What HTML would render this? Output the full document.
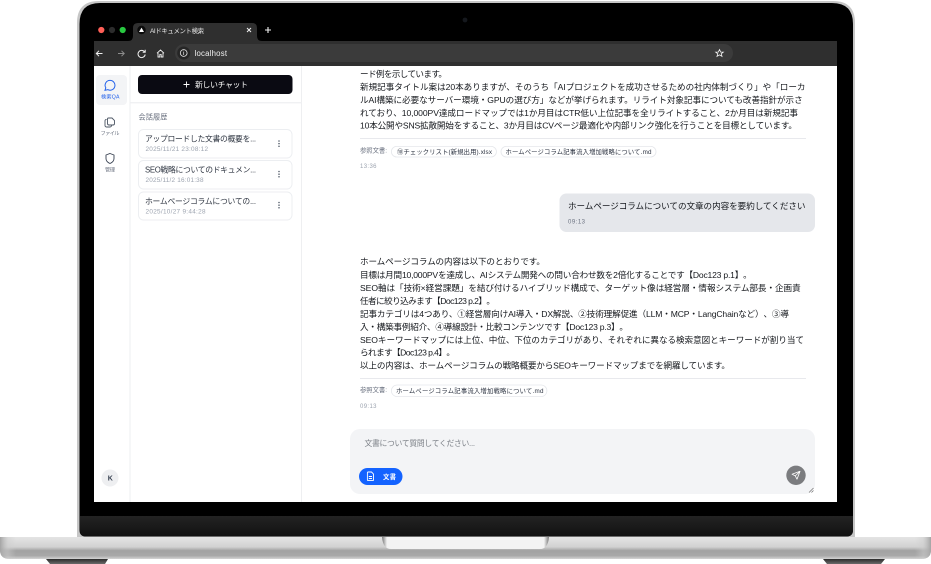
<!DOCTYPE html>
<html lang="ja"><head><meta charset="utf-8"><title>AIドキュメント検索</title>
<style>
html,body{margin:0;padding:0;background:#fff;width:931px;height:564px;overflow:hidden}
svg{display:block}
text{font-family:"Liberation Sans","Noto Sans CJK JP",sans-serif;white-space:pre;text-spacing-trim:space-all}
.m{font-size:8.6px;fill:#15181d}
.s{font-size:6.4px;fill:#6b7280}
.c{font-size:6.3px;fill:#2b3240}
.t{font-size:6px;fill:#9ca3af}
.n{font-size:7.8px;fill:#2f3642}
.d{font-size:6.4px;fill:#9ca3af}
</style></head><body>
<svg width="931" height="564" viewBox="0 0 931 564" xmlns="http://www.w3.org/2000/svg">
<defs>
<linearGradient id="base" x1="0" y1="0" x2="0" y2="1"><stop offset="0" stop-color="#e4e4e4"/><stop offset=".45" stop-color="#d2d2d2"/><stop offset=".62" stop-color="#a2a2a2"/><stop offset=".85" stop-color="#a8a8a8"/><stop offset="1" stop-color="#d4d4d4"/></linearGradient>
<linearGradient id="endL" x1="0" y1="0" x2="1" y2="0"><stop offset="0" stop-color="#a4a4a4"/><stop offset=".5" stop-color="#cdcdcd" stop-opacity=".5"/><stop offset="1" stop-color="#cdcdcd" stop-opacity="0"/></linearGradient>
<linearGradient id="endR" x1="1" y1="0" x2="0" y2="0"><stop offset="0" stop-color="#a4a4a4"/><stop offset=".5" stop-color="#cdcdcd" stop-opacity=".5"/><stop offset="1" stop-color="#cdcdcd" stop-opacity="0"/></linearGradient>
<linearGradient id="bez" x1="0" y1="0" x2="0" y2="1"><stop offset="0" stop-color="#232323"/><stop offset="1" stop-color="#111"/></linearGradient>
<linearGradient id="notch" x1="0" y1="0" x2="1" y2="0"><stop offset="0" stop-color="#777"/><stop offset=".03" stop-color="#f3f3f3"/><stop offset=".97" stop-color="#f3f3f3"/><stop offset="1" stop-color="#777"/></linearGradient>
<linearGradient id="foot" x1="0" y1="0" x2="0" y2="1"><stop offset="0" stop-color="#2c2c2c"/><stop offset="1" stop-color="#6a6a6a"/></linearGradient>
</defs>

<!-- lid -->
<path d="M99 1H833Q855 1 855 23V537H77V23Q77 1 99 1Z" fill="#c6c6c6"/>
<path d="M100 3H832Q853 3 853 24V530Q853 536.5 846 536.5H86Q79.5 536.5 79.5 530V24Q79.5 3 100 3Z" fill="#000"/>
<path d="M80 516H853V530Q853 536.5 846 536.5H86Q80 536.5 80 530Z" fill="url(#bez)"/>
<circle cx="465" cy="20" r="2.4" fill="#15181d"/>

<!-- base -->
<path d="M46 559H108L105 564H50Z" fill="url(#foot)"/>
<path d="M823 559H885L881 564H827Z" fill="url(#foot)"/>
<path d="M0 537H931V550Q931 559 921 559H10Q0 559 0 550Z" fill="url(#base)"/>
<path d="M0 537H16V559H10Q0 559 0 550Z" fill="url(#endL)"/>
<path d="M931 537H915V559H921Q931 559 931 550Z" fill="url(#endR)"/>
<path d="M382 537H549Q548 549 540 549H391Q383 549 382 537Z" fill="url(#notch)"/>

<!-- browser chrome -->
<rect x="94" y="41" width="743" height="25" fill="#2f2f2f"/>
<path d="M128 41Q133 41 133 36V28Q133 23 138 23H252Q257 23 257 28V36Q257 41 262 41Z" fill="#2f2f2f"/>
<circle cx="101.3" cy="30" r="3.1" fill="#ff5f57"/>
<circle cx="112" cy="30" r="3.1" fill="#2c2c2c"/>
<circle cx="122.7" cy="30" r="3.1" fill="#28c840"/>
<circle cx="141.5" cy="30" r="4.2" fill="#0a0a0a"/>
<path d="M141.5 27.6L144 32H139Z" fill="#fff"/>
<text x="150" y="33" font-size="6.4" fill="#e8e8e8" textLength="54">AIドキュメント検索</text>
<path d="M247 28L251 32M251 28L247 32" stroke="#f0f0f0" stroke-width="1"/>
<path d="M268 27V33M265 30H271" stroke="#f0f0f0" stroke-width="1.1"/>
<path d="M102.5 53.5H96.5M99 50.8L96.3 53.5L99 56.2" stroke="#f0f0f0" stroke-width="1" fill="none"/>
<path d="M118 53.5H124M121.5 50.8L124.2 53.5L121.5 56.2" stroke="#8c8c8c" stroke-width="1" fill="none"/>
<path d="M144.5 51.8A3.6 3.6 0 1 0 145.2 54.5M145.2 49.8V52.3H142.7" stroke="#f0f0f0" stroke-width="1" fill="none"/>
<path d="M157 53.2L160.5 50L164 53.2M158 52.5V57H159.8V54.6H161.2V57H163V52.5" stroke="#f0f0f0" stroke-width=".9" fill="none"/>
<rect x="175" y="44" width="558" height="18" rx="9" fill="#3b3b3b"/>
<circle cx="183.7" cy="53" r="6.5" fill="#262626"/>
<circle cx="183.7" cy="53" r="3.4" stroke="#e8e8e8" stroke-width=".8" fill="none"/>
<path d="M183.7 52V55M183.7 50.8V51.4" stroke="#e8e8e8" stroke-width=".7"/>
<text x="194.5" y="56" font-size="7.8" fill="#f0f0f0" textLength="32.5">localhost</text>
<path d="M719.5 49.6L720.7 52.1H723.3L721.2 53.8L722 56.4L719.5 54.9L717 56.4L717.8 53.8L715.7 52.1H718.3Z" fill="none" stroke="#f0f0f0" stroke-width=".8"/>

<!-- page -->
<rect x="94" y="66" width="743" height="436" fill="#fff"/>
<path d="M130 66V502M301.5 66V502" stroke="#eeeff1" stroke-width="1"/>
<rect x="130.5" y="102" width="171" height="1.4" fill="#f0f1f3"/>

<!-- rail -->
<rect x="96" y="75" width="31" height="30" rx="4" fill="#f3f4f6"/>
<path d="M110 80.4A4.9 4.9 0 1 1 107.7 89.6L105 90.3L105.8 87.8A4.9 4.9 0 0 1 110 80.4Z" fill="none" stroke="#2563eb" stroke-width="1"/>
<text x="101" y="98.3" font-size="5.2" fill="#2563eb" textLength="18.5">検索QA</text>
<path d="M106.5 119.5H106A1.5 1.5 0 0 0 105 121V125.5A1.5 1.5 0 0 0 106.5 127H110A1.5 1.5 0 0 0 111.5 125.5V125" fill="none" stroke="#4b5563" stroke-width=".9"/>
<path d="M108.5 118H112L114.5 120.5V123.5A1.5 1.5 0 0 1 113 125H109A1.5 1.5 0 0 1 107.5 123.5V119A1 1 0 0 1 108.5 118Z" fill="none" stroke="#4b5563" stroke-width=".9"/>
<text x="100.5" y="135" font-size="5.2" fill="#6b7280" textLength="19">ファイル</text>
<path d="M110 153.5L114 155V158.5C114 161 112.2 162.6 110 163.5C107.8 162.6 106 161 106 158.5V155Z" fill="none" stroke="#374151" stroke-width=".9"/>
<text x="105" y="171.3" font-size="5.2" fill="#6b7280" textLength="10">管理</text>
<circle cx="110" cy="478" r="8.5" fill="#eeeff1"/>
<text x="107.8" y="480.5" font-size="7" font-weight="bold" fill="#374151">K</text>

<!-- sidebar -->
<rect x="138" y="75" width="154.5" height="19" rx="4" fill="#0a0a12"/>
<path d="M186.5 81.5V87.5M183.5 84.5H189.5" stroke="#fff" stroke-width=".9"/>
<text x="195" y="87.3" font-size="7.8" fill="#fff" textLength="53">新しいチャット</text>
<text x="138.5" y="119.5" font-size="7.2" fill="#6b7280" textLength="29">会話履歴</text>
<g fill="#fff" stroke="#eceef1" stroke-width=".9">
<rect x="138.5" y="129.5" width="153.5" height="28.5" rx="5"/>
<rect x="138.5" y="160.5" width="153.5" height="28.5" rx="5"/>
<rect x="138.5" y="192" width="153.5" height="28" rx="5"/>
</g>
<text class="n" x="145" y="141.5" textLength="111">アップロードした文書の概要を...</text>
<text class="d" x="145.5" y="151" textLength="62.5">2025/11/21 23:08:12</text>
<text class="n" x="145" y="172.5" textLength="111">SEO戦略についてのドキュメン...</text>
<text class="d" x="145.5" y="182" textLength="58">2025/11/2 16:01:38</text>
<text class="n" x="145" y="204" textLength="111">ホームページコラムについての...</text>
<text class="d" x="145.5" y="213.5" textLength="60">2025/10/27 9:44:28</text>
<g fill="#4b5563">
<circle cx="279" cy="141" r=".75"/><circle cx="279" cy="143.6" r=".75"/><circle cx="279" cy="146.2" r=".75"/>
<circle cx="279" cy="171.5" r=".75"/><circle cx="279" cy="174.1" r=".75"/><circle cx="279" cy="176.7" r=".75"/>
<circle cx="279" cy="202.5" r=".75"/><circle cx="279" cy="205.1" r=".75"/><circle cx="279" cy="207.7" r=".75"/>
</g>

<!-- assistant 1 -->
<text class="m" x="360" y="77" textLength="87">ード例を示しています。</text>
<text class="m" x="360" y="90" textLength="445.5">新規記事タイトル案は20本ありますが、そのうち「AIプロジェクトを成功させるための社内体制づくり」や「ローカ</text>
<text class="m" x="360" y="103" textLength="442.7">ルAI構築に必要なサーバー環境・GPUの選び方」などが挙げられます。リライト対象記事についても改善指針が示さ</text>
<text class="m" x="360" y="116" textLength="438">れており、10,000PV達成ロードマップでは1か月目はCTR低い上位記事を全リライトすること、2か月目は新規記事</text>
<text class="m" x="360" y="128.7" textLength="437">10本公開やSNS拡散開始をすること、3か月目はCVページ最適化や内部リンク強化を行うことを目標としています。</text>
<rect x="360" y="138" width="446" height=".9" fill="#e5e7eb"/>
<text class="s" x="360" y="152.5" textLength="27">参照文書:</text>
<g fill="#fff" stroke="#e5e7eb" stroke-width=".8">
<rect x="391.4" y="146.4" width="105" height="10.6" rx="5.3"/>
<rect x="501" y="146.4" width="155" height="10.6" rx="5.3"/>
<rect x="391.4" y="385" width="155.5" height="11.6" rx="5.8"/>
</g>
<text class="c" x="397" y="154" textLength="95">⑩チェックリスト(新規出用).xlsx</text>
<text class="c" x="505.5" y="154" textLength="146">ホームページコラム記事流入増加戦略について.md</text>
<text class="t" x="360" y="167.8" textLength="16.5">13:36</text>

<!-- user -->
<rect x="559.5" y="193.5" width="255.5" height="38.5" rx="7" fill="#e5e7eb"/>
<text x="568" y="209" font-size="8.6" fill="#15181d" textLength="237.5">ホームページコラムについての文章の内容を要約してください</text>
<text x="568" y="223.5" font-size="6" fill="#6b7280" textLength="17">09:13</text>

<!-- assistant 2 -->
<text class="m" x="360" y="264.7" textLength="185">ホームページコラムの内容は以下のとおりです。</text>
<text class="m" x="360" y="278" textLength="391.7">目標は月間10,000PVを達成し、AIシステム開発への問い合わせ数を2倍化することです【Doc123 p.1】。</text>
<text class="m" x="360" y="291" textLength="440.7">SEO軸は「技術×経営課題」を結び付けるハイブリッド構成で、ターゲット像は経営層・情報システム部長・企画責</text>
<text class="m" x="360" y="304" textLength="135">任者に絞り込みます【Doc123 p.2】。</text>
<text class="m" x="360" y="317" textLength="429">記事カテゴリは4つあり、①経営層向けAI導入・DX解説、②技術理解促進（LLM・MCP・LangChainなど）、③導</text>
<text class="m" x="360" y="330" textLength="268">入・構築事例紹介、④導線設計・比較コンテンツです【Doc123 p.3】。</text>
<text class="m" x="360" y="343" textLength="444">SEOキーワードマップには上位、中位、下位のカテゴリがあり、それぞれに異なる検索意図とキーワードが割り当て</text>
<text class="m" x="360" y="355.7" textLength="95">られます【Doc123 p.4】。</text>
<text class="m" x="360" y="368.7" textLength="370">以上の内容は、ホームページコラムの戦略概要からSEOキーワードマップまでを網羅しています。</text>
<rect x="360" y="378" width="446" height=".9" fill="#e5e7eb"/>
<text class="s" x="360" y="392" textLength="27">参照文書:</text>
<text class="c" x="396" y="393.2" textLength="147.5">ホームページコラム記事流入増加戦略について.md</text>
<text class="t" x="360" y="408" textLength="16.5">09:13</text>

<!-- input -->
<rect x="350" y="429" width="465" height="65" rx="10" fill="#f3f4f6"/>
<text x="364.5" y="446" font-size="7.8" fill="#7c8087" textLength="110.5">文書について質問してください...</text>
<rect x="359" y="468" width="43.5" height="17" rx="8.5" fill="#1463ff"/>
<path d="M368 472H371.5L373.5 474V480A.6 .6 0 0 1 373 480.6H368A.6 .6 0 0 1 367.4 480V472.6A.6 .6 0 0 1 368 472ZM368.8 476.5H372M368.8 478.5H372" fill="none" stroke="#fff" stroke-width=".9"/>
<text x="383" y="479" font-size="6.4" fill="#fff" font-weight="bold" textLength="13">文書</text>
<circle cx="796" cy="475.3" r="9.7" fill="#7b7c7f"/>
<path d="M800 471.3L792 474.2L795.3 475.9L797 479.2ZM795.3 475.9L800 471.3" fill="none" stroke="#fff" stroke-width=".8" stroke-linejoin="round"/>
<path d="M809 492.5L813.5 488M811.5 492.5L813.5 490.5" stroke="#666" stroke-width=".6"/>
</svg>
</body></html>
